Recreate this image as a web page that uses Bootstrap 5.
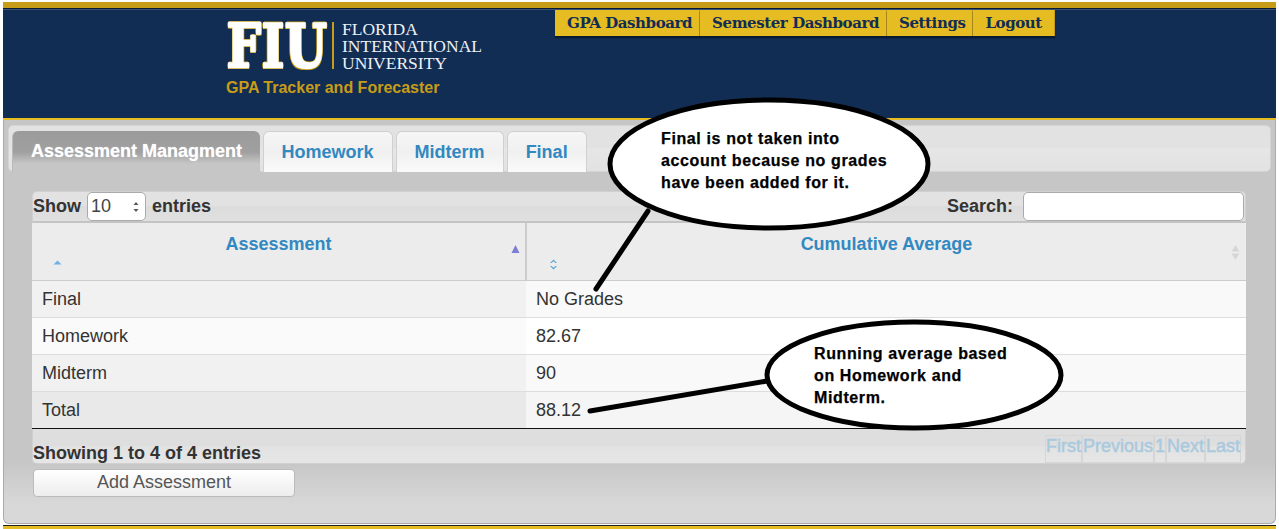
<!DOCTYPE html>
<html lang="en">
<head>
    <meta charset="UTF-8">
    <meta name="viewport" content="width=device-width, initial-scale=1.0">
    <title>GPA Tracker and Forecaster</title>
    <link rel="stylesheet" href="https://cdn.jsdelivr.net/npm/bootstrap@5.3.0/dist/css/bootstrap.min.css">
    <style>
        html, body { height: 529px; overflow: hidden; }
        body {
            background: #fff;
            font-family: "Liberation Sans", Arial, sans-serif;
            font-size: 18px;
            color: #333;
            padding: 2px 3px 0;
            position: relative;
        }
        .site-head {
            height: 118px;
            background: #122d54;
            border-top: 6px solid #c79c17;
            border-bottom: 2px solid #e5bc21;
            box-shadow: inset 0 1px 0 #0a1a33, inset 0 2px 0 #3a5374;
            display: flex;
            align-items: flex-start;
        }
        .brand { margin: 14px 0 0 223px; width: 329px; }
        .brand-row { display: flex; align-items: stretch; height: 47px; }
        .fiu-mark {
            font-family: "DejaVu Serif", "Liberation Serif", serif;
            font-weight: 700;
            font-size: 60px;
            line-height: 48px;
            color: #fff;
            -webkit-text-stroke: 2.5px #fff;
            text-shadow: 2px 0 #c79c17, -2px 0 #c79c17, 0 2px #c79c17, 0 -2px #c79c17,
                         1.5px 1.5px #c79c17, -1.5px 1.5px #c79c17, 1.5px -1.5px #c79c17, -1.5px -1.5px #c79c17;
            width: 97px;
            padding-left: 1px;
            transform: scaleX(.8);
            transform-origin: left center;
            letter-spacing: 1px;
            white-space: nowrap;
        }
        .brand-line { width: 2px; background: #c79c17; margin: 0 8px 0 9px; }
        .brand-name {
            font-family: "Liberation Serif", serif;
            font-size: 17.5px;
            line-height: 17px;
            color: #eef1f5;
            white-space: nowrap;
            margin-top: -1px;
        }
        .brand-sub { font-weight: 700; font-size: 16px; color: #c79c17; margin-top: 9px; line-height: 20px; }
        .top-menu { margin-top: 2px; }
        .top-menu a {
            display: block;
            height: 26px;
            padding: 0 7px 0 12px;
            line-height: 26px;
            font-family: "DejaVu Serif", serif;
            font-weight: 700;
            font-size: 15px;
            letter-spacing: -.42px;
            color: #122d54;
            background: #e5bc21;
            border-right: 1px solid #c79c17;
            box-shadow: 0 2px 1px #0a1a33;
            text-decoration: none;
        }
        .top-menu a:last-child { padding-right: 12px; }
        .main-panel {
            height: 404px;
            background: linear-gradient(#c6c6c6 0, #c6c6c6 340px, #d8d8d8 385px, #d8d8d8 100%);
            border: 1px solid #aaa;
            border-top: 0;
            border-radius: 0 0 6px 6px;
            padding: 5px 4px 0;
        }
        .tab-strip {
            height: 47px;
            background: linear-gradient(#e2e2e2 50%, #e6e6e6 50%, #e2e2e2);
            border: 1px solid #d4d4d4;
            border-radius: 5px;
            padding: 5px 0 0 3px;
            gap: 3px;
            margin-bottom: 19px;
            flex-wrap: nowrap;
        }
        .tab-strip .nav-link {
            height: 41px;
            padding: 0 18.5px 0 17.5px;
            line-height: 40px;
            font-weight: 700;
            color: #3288c0;
            background: linear-gradient(#f6f6f6, #f0f0f0 50%, #fafafa);
            border: 1px solid #d0d0d0;
            border-bottom: 0;
            border-radius: 6px 6px 0 0;
            margin: 0;
        }
        .tab-strip .nav-link.active {
            height: 42px;
            padding: 0 18px;
            color: #fff;
            background: linear-gradient(#9b9b9b 0, #a0a0a0 50%, #c6c6c6 78%);
            border: 0;
            border-left: 1px solid #bbb;
            text-shadow: 0 0 1px #ddd;
            margin-right: 0;
        }
        .data-box { margin: 0 24px; width: 1214px; }
        .table-tools {
            height: 32px;
            background: linear-gradient(#e2e2e2 50%, #dcdcdc 50%, #e0e0e0);
            border: 1px solid #d0d0d0;
            border-bottom: 2px solid #c4c4c4;
            border-radius: 5px 5px 0 0;
            font-weight: 700;
        }
        .length-pick {
            width: 59px;
            height: 29px;
            padding: 0 0 0 3px;
            margin: 0 6px;
            font-family: inherit;
            font-size: 18px;
            color: #444;
            border: 1px solid #aaa;
            border-radius: 5px;
            background-color: #fff;
            appearance: none;
            background-image: url("data:image/svg+xml,%3Csvg xmlns='http://www.w3.org/2000/svg' width='6' height='12'%3E%3Cpath d='M3 1l2.500 3h-5zM3 11l-2.500-3h5z' fill='%23555'/%3E%3C/svg%3E");
            background-repeat: no-repeat;
            background-position: right 6px center;
            background-size: 6px 12px;
        }
        .search-pick {
            width: 221px;
            height: 29px;
            margin-left: 10px;
            margin-right: 1px;
            border: 1px solid #aaa;
            border-radius: 5px;
            background: #fff;
        }
        .grade-table { margin: 0; width: 100%; border-collapse: collapse; table-layout: fixed; font-size: 18px; }
        .grade-table > * > * > * { background: none; box-shadow: none; color: #333; }
        .grade-table th {
            position: relative;
            height: 57px;
            padding: 9px 0 0;
            background: #ececec;
            font-weight: 700;
            text-align: center;
            vertical-align: top;
            color: #3288c0;
            line-height: 24px;
            border-bottom: 1px solid #ccc;
        }
        .grade-table th:first-child { width: 494px; border-right: 2px solid #ccc; }
        .sort-low { display: block; margin: 4px 0 0 21px; line-height: 0; text-align: left; }
        .grade-table th:nth-child(2) .sort-low { margin: 3px 0 0 22px; }
        .sort-side { position: absolute; right: 6px; top: 22px; line-height: 0; }
        .grade-table th:first-child .sort-side { right: 5px; top: 22px; }
        .grade-table td {
            height: 37px;
            padding: 0 10px;
            vertical-align: middle;
            border-bottom: 1px solid #ddd;
            line-height: 24px;
        }
        .row-a td:first-child { background: #f1f1f1; }
        .row-a td:last-child { background: #f9f9f9; }
        .row-b td:first-child { background: #fafafa; }
        .row-b td:last-child { background: #fff; }
        .row-t td:first-child { background: #e9e9e9; }
        .row-t td:last-child { background: #f5f5f5; }
        .grade-table tr:last-child td { border-bottom: 1px solid #111; }
        .table-foot {
            height: 35px;
            background: linear-gradient(#dedede 50%, #e2e2e2 50%, #e6e6e6);
            border: 1px solid #d0d0d0;
            border-top: 0;
            border-radius: 0 0 5px 5px;
            font-weight: 700;
        }
        .foot-count { margin-top: 13px; line-height: 22px; }
        .pager-set { margin: 6px 4px 0 0; color: #a9c9de; line-height: 20px; font-weight: 400; -webkit-text-stroke: .45px #a9c9de; }
        .pager-set span { border: 1px solid #d6d6d6; padding: 0; }
        .add-btn {
            display: block;
            width: 262px;
            height: 28px;
            margin: 5px 0 0 1px;
            padding: 0 0 1px;
            font-size: 18px;
            line-height: 25px;
            color: #555;
            background: linear-gradient(#fff, #ededed);
            border: 1px solid #bbb;
            border-radius: 4px;
        }
        .gold-foot { height: 5px; margin-top: 1px; background: #e5bc21; border-top: 1px solid #222; }
        .note-art { position: absolute; left: 0; top: 0; pointer-events: none; }
        .note-text {
            position: absolute;
            font-weight: 700;
            font-size: 16px;
            line-height: 22px;
            color: #000;
            letter-spacing: .62px;
            -webkit-text-stroke: .25px #000;
            white-space: nowrap;
        }
        .note-one { left: 661px; top: 128px; }
        .note-two { left: 814px; top: 343px; }
    </style>
</head>
<body>
    <header class="site-head">
        <div class="brand">
            <div class="brand-row">
                <div class="fiu-mark">FIU</div>
                <div class="brand-line"></div>
                <div class="brand-name">FLORIDA<br>INTERNATIONAL<br>UNIVERSITY</div>
            </div>
            <div class="brand-sub">GPA Tracker and Forecaster</div>
        </div>
        <nav class="top-menu d-flex">
            <a href="#">GPA Dashboard</a>
            <a href="#">Semester Dashboard</a>
            <a href="#">Settings</a>
            <a href="#">Logout</a>
        </nav>
    </header>

    <main class="main-panel">
        <ul class="nav tab-strip">
            <li class="nav-item"><a class="nav-link active" href="#">Assessment Managment</a></li>
            <li class="nav-item"><a class="nav-link" href="#">Homework</a></li>
            <li class="nav-item"><a class="nav-link" href="#">Midterm</a></li>
            <li class="nav-item"><a class="nav-link" href="#">Final</a></li>
        </ul>

        <div class="data-box">
            <div class="table-tools d-flex justify-content-between align-items-center">
                <label class="d-flex align-items-center">Show
                    <select class="length-pick"><option>10</option></select>
                    entries</label>
                <label class="d-flex align-items-center">Search:<input class="search-pick" type="text"></label>
            </div>
            <table class="table grade-table">
                <thead>
                    <tr>
                        <th>Assessment
                            <span class="sort-low"><svg width="9" height="5"><path d="M4.500 0.500L8.500 4.500H0.500z" fill="#6cb2e2"/></svg></span>
                            <span class="sort-side"><svg width="9" height="8"><path d="M4.500 0L8.500 8H0.500z" fill="#7d7dd6"/></svg></span>
                        </th>
                        <th>Cumulative Average
                            <span class="sort-low"><svg width="9" height="11"><path d="M4.500 0.500L8 4H6.500L4.500 2.200 2.500 4H1zM4.500 10.500L1 7H2.500L4.500 8.800 6.500 7H8z" fill="#5aa5d8"/></svg></span>
                            <span class="sort-side"><svg width="9" height="15"><path d="M4.500 0L8.500 6.500H0.500zM4.500 15L0.500 8.500H8.500z" fill="#d6d6d6"/></svg></span>
                        </th>
                    </tr>
                </thead>
                <tbody>
                    <tr class="row-a"><td>Final</td><td>No Grades</td></tr>
                    <tr class="row-b"><td>Homework</td><td>82.67</td></tr>
                    <tr class="row-a"><td>Midterm</td><td>90</td></tr>
                    <tr class="row-t"><td>Total</td><td>88.12</td></tr>
                </tbody>
            </table>
            <div class="table-foot d-flex justify-content-between">
                <div class="foot-count">Showing 1 to 4 of 4 entries</div>
                <div class="pager-set d-flex"><span>First</span><span>Previous</span><span>1</span><span>Next</span><span>Last</span></div>
            </div>
            <button class="add-btn" type="button">Add Assessment</button>
        </div>
    </main>
    <div class="gold-foot"></div>

    <svg class="note-art" width="1279" height="529">
        <g fill="#fff" stroke="#000" stroke-width="5" stroke-linecap="round">
            <path d="M596 289L648 211" fill="none"/>
            <path d="M590 411L767 381" fill="none"/>
            <ellipse cx="769" cy="164" rx="159" ry="64"/>
            <ellipse cx="914" cy="375" rx="147" ry="53"/>
        </g>
    </svg>
    <div class="note-text note-one">Final is not taken into<br>account because no grades<br>have been added for it.</div>
    <div class="note-text note-two">Running average based<br>on Homework and<br>Midterm.</div>

    <script src="https://cdn.jsdelivr.net/npm/bootstrap@5.3.0/dist/js/bootstrap.bundle.min.js"></script>
</body>
</html>
